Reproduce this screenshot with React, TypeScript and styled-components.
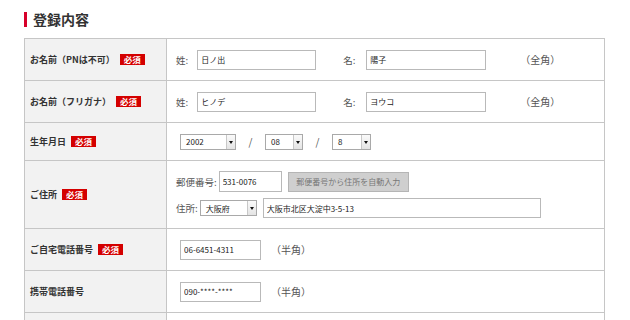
import styled, { createGlobalStyle } from "styled-components";

const GlobalStyle = createGlobalStyle`
  body {
    margin: 0;
    background: #fff;
    font-family: "Noto Sans CJK JP", "Noto Sans", sans-serif;
    color: #333;
  }
`;

export default function App() {
  return (
    <>
      <GlobalStyle />
      <Page>
        <Heading>登録内容</Heading>
        <FormTable>
          <Row $h={42}>
            <Label>
              お名前（PNは不可）<Badge>必須</Badge>
            </Label>
            <Field>
              <Caption>姓:</Caption>
              <TextBox $w={119} $ml={9} defaultValue='日ノ出' />
              <Caption $ml={27}>名:</Caption>
              <TextBox $w={120} $ml={11} defaultValue='陽子' />
              <Note $ml={34}>（全角）</Note>
            </Field>
          </Row>
          <Row $h={42}>
            <Label>
              お名前（フリガナ）<Badge>必須</Badge>
            </Label>
            <Field>
              <Caption>姓:</Caption>
              <TextBox $w={119} $ml={9} defaultValue='ヒノデ' />
              <Caption $ml={27}>名:</Caption>
              <TextBox $w={120} $ml={11} defaultValue='ヨウコ' />
              <Note $ml={34}>（全角）</Note>
            </Field>
          </Row>
          <Row $h={38}>
            <Label>
              生年月日<Badge>必須</Badge>
            </Label>
            <Field $pl={13}>
              <Select $w={56}>
                2002
                <Arrow />
              </Select>
              <Slash>/</Slash>
              <Select $w={38}>
                08
                <Arrow />
              </Select>
              <Slash>/</Slash>
              <Select $w={39}>
                8
                <Arrow />
              </Select>
            </Field>
          </Row>
          <Row $h={68}>
            <Label>
              ご住所<Badge>必須</Badge>
            </Label>
            <FieldStack>
              <Line>
                <Caption>郵便番号:</Caption>
                <TextBox $w={63} $h={21} $ml={2} defaultValue='531-0076' />
                <ZipButton>郵便番号から住所を自動入力</ZipButton>
              </Line>
              <Line>
                <Caption>住所:</Caption>
                <Select $w={57} $ml={2}>
                  大阪府
                  <Arrow />
                </Select>
                <TextBox $w={278} $ml={6} defaultValue='大阪市北区大淀中3-5-13' />
              </Line>
            </FieldStack>
          </Row>
          <Row $h={42}>
            <Label>
              ご自宅電話番号<Badge>必須</Badge>
            </Label>
            <Field $pl={13}>
              <TextBox $w={81} defaultValue='06-6451-4311' />
              <Note $ml={10}>（半角）</Note>
            </Field>
          </Row>
          <Row $h={42}>
            <Label>携帯電話番号</Label>
            <Field $pl={13}>
              <TextBox $w={81} defaultValue='090-****-****' />
              <Note $ml={10}>（半角）</Note>
            </Field>
          </Row>
          <Row $h={42}>
            <Label />
            <Field $pl={13} />
          </Row>
        </FormTable>
      </Page>
    </>
  );
}

const Page = styled.div`
  padding: 12px 0 0 24px;
  width: 581px;
`;

const Heading = styled.h2`
  margin: 0 0 11px;
  padding-left: 6px;
  border-left: 3px solid #d7002a;
  height: 15px;
  line-height: 15px;
  font-size: 14px;
  font-weight: bold;
  color: #333;
`;

const FormTable = styled.div`
  border-top: 1px solid #c6c6c6;
  border-left: 1px solid #c6c6c6;
  border-right: 1px solid #c6c6c6;
`;

const Row = styled.div<{ $h: number }>`
  display: grid;
  grid-template-columns: 142px 1fr;
  height: ${(p) => p.$h}px;
  box-sizing: border-box;
  border-bottom: 1px solid #c6c6c6;
`;

const Label = styled.div`
  display: flex;
  align-items: center;
  padding-left: 5px;
  background: #f2f2f2;
  border-right: 1px solid #c6c6c6;
  font-size: 9px;
  font-weight: bold;
  color: #333;
  white-space: nowrap;
`;

const Badge = styled.span`
  display: inline-block;
  margin-left: 5px;
  padding: 0 4px;
  height: 11px;
  line-height: 11px;
  background: #d40000;
  color: #fff;
  font-size: 8.5px;
  font-weight: bold;
`;

const Field = styled.div<{ $pl?: number }>`
  display: flex;
  align-items: center;
  padding-left: ${(p) => p.$pl ?? 9}px;
`;

const FieldStack = styled.div`
  display: flex;
  flex-direction: column;
  justify-content: center;
  gap: 6px;
  padding-left: 9px;
`;

const Line = styled.div`
  display: flex;
  align-items: center;
`;

const Caption = styled.span<{ $ml?: number }>`
  margin-left: ${(p) => p.$ml ?? 0}px;
  font-size: 9.5px;
  color: #555;
  white-space: nowrap;
`;

const Note = styled.span<{ $ml?: number }>`
  margin-left: ${(p) => p.$ml ?? 0}px;
  font-size: 10px;
  color: #555;
  white-space: nowrap;
`;

const TextBox = styled.input<{ $w: number; $h?: number; $ml?: number }>`
  box-sizing: border-box;
  width: ${(p) => p.$w}px;
  height: ${(p) => p.$h ?? 20}px;
  margin: 0 0 0 ${(p) => p.$ml ?? 0}px;
  padding: 0 3px;
  border: 1px solid #b9b9b9;
  border-radius: 0;
  background: #fff;
  font-family: "Noto Sans CJK JP", "Noto Sans", sans-serif;
  font-size: 8px;
  color: #222;
  outline: none;
`;

const Select = styled.div<{ $w: number; $ml?: number }>`
  position: relative;
  box-sizing: border-box;
  display: flex;
  align-items: center;
  width: ${(p) => p.$w}px;
  height: 16px;
  margin-left: ${(p) => p.$ml ?? 0}px;
  padding-left: 5px;
  border: 1px solid #a9a9a9;
  background: #fff;
  font-size: 8px;
  color: #222;
`;

const Arrow = styled.span`
  position: absolute;
  top: 0;
  right: 0;
  bottom: 0;
  width: 8px;
  border-left: 1px solid #c8c8c8;
  background: linear-gradient(#fafafa, #e4e4e4);

  &::after {
    content: "";
    position: absolute;
    left: 2px;
    top: 6px;
    border-left: 2px solid transparent;
    border-right: 2px solid transparent;
    border-top: 3px solid #111;
  }
`;

const Slash = styled.span`
  width: 29px;
  text-align: center;
  font-size: 10px;
  color: #555;
`;

const ZipButton = styled.button`
  box-sizing: border-box;
  width: 121px;
  height: 20px;
  margin-left: 6px;
  padding: 0;
  border: 1px solid #b5b5b5;
  background: #cfcfcf;
  font-family: "Noto Sans CJK JP", "Noto Sans", sans-serif;
  font-size: 8px;
  color: #777;
`;
